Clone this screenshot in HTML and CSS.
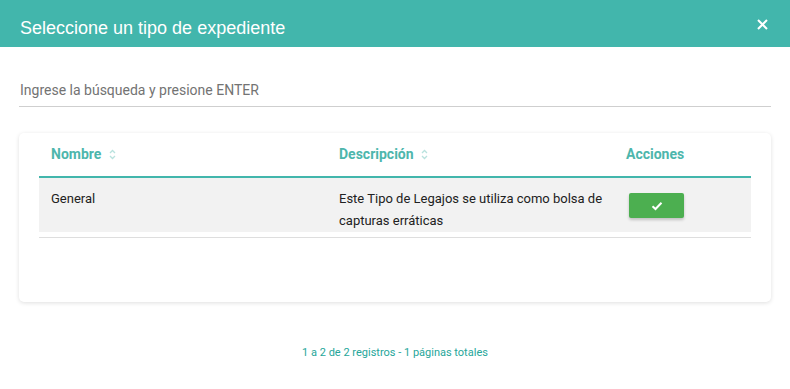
FILE: index.html
```html
<!DOCTYPE html>
<html lang="es">
<head>
    <meta charset="utf-8" />
    <title>Seleccione un tipo de expediente</title>
    <link rel="stylesheet" href="styles.css">
</head>
<body>

    <div class="modal-header">
        <h1>Seleccione un tipo de expediente</h1>
        <span class="close">
            <svg width="11" height="11" viewBox="0 0 11 11"><path d="M1 1L10 10M10 1L1 10" stroke="#fff" stroke-width="2" fill="none"/></svg>
        </span>
    </div>

    <div class="modal-body">
        <div class="search">
            <input type="text" placeholder="Ingrese la búsqueda y presione ENTER">
        </div>

        <div class="card">
            <table>
                <thead>
                    <tr>
                        <th class="col-name">Nombre <svg class="sort" width="7" height="11" viewBox="0 0 7 11"><path d="M1 4L3.5 1.5L6 4M1 7L3.5 9.5L6 7" stroke="#b9e2de" stroke-width="1.3" fill="none"/></svg></th>
                        <th class="col-desc">Descripción <svg class="sort" width="7" height="11" viewBox="0 0 7 11"><path d="M1 4L3.5 1.5L6 4M1 7L3.5 9.5L6 7" stroke="#b9e2de" stroke-width="1.3" fill="none"/></svg></th>
                        <th class="col-actions">Acciones</th>
                    </tr>
                </thead>
                <tbody>
                    <tr>
                        <td>General</td>
                        <td class="desc">Este Tipo de Legajos se utiliza como bolsa de capturas erráticas</td>
                        <td>
                            <button class="btn-ok">
                                <svg width="12" height="10" viewBox="0 0 12 10"><path d="M1.5 5.2L4.5 8L10.5 1.8" stroke="#fff" stroke-width="2" fill="none"/></svg>
                            </button>
                        </td>
                    </tr>
                </tbody>
            </table>
            <div class="rule"></div>
        </div>

        <p class="pager">1 a 2 de 2 registros - 1 páginas totales</p>
    </div>

</body>
</html>
```

FILE: styles.css
```css
body {
    background: #fff;
    color: #212121;
    font: 13px Roboto, 'Liberation Sans', arial, sans-serif;
    margin: 0;
    padding: 0;
}

.modal-header {
    background: #42b6ac;
    height: 47px;
    box-sizing: border-box;
    display: flex;
    align-items: center;
    justify-content: space-between;
    padding: 8px 22px 0 20px;
}

    .modal-header h1 {
        font: 18px 'Liberation Sans', arial, sans-serif;
        color: #fff;
        margin: 0;
        padding-top: 2px;
    }

    .modal-header .close {
        display: flex;
        margin-top: -7px;
    }

.modal-body {
    padding: 0 19px;
}

.search {
    padding-top: 23px;
}

    .search input {
        width: 100%;
        box-sizing: border-box;
        height: 37px;
        border: none;
        border-bottom: 1px solid #cfcfcf;
        outline: none;
        padding: 3px 1px 0;
        font: 14px Roboto, sans-serif;
        color: #212121;
    }

        .search input::placeholder {
            color: #737373;
        }

.card {
    margin-top: 26px;
    background: #fff;
    border-radius: 5px;
    box-shadow: 0 1px 4px rgba(0, 0, 0, 0.13);
    padding: 0 20px 64px;
}

table {
    width: 100%;
    border-collapse: collapse;
}

th {
    text-align: left;
    font: bold 14px Roboto, sans-serif;
    color: #4db6ac;
    padding: 12px 12px 12px;
    line-height: 19px;
    border-bottom: 2px solid #42b6ac;
}

    th .sort {
        margin-left: 4px;
        vertical-align: -1px;
    }

.col-name { width: 264px; }
.col-desc { width: 263px; }

td {
    background: #f2f2f2;
    vertical-align: top;
    padding: 10px 12px 0;
    line-height: 22px;
    height: 44px;
    color: #212121;
}

    td.desc {
        padding-right: 0;
    }

.btn-ok {
    margin: 5px 0 0 3px;
    width: 55px;
    height: 25px;
    border: none;
    border-radius: 2px;
    background: #4caf50;
    box-shadow: 0 2px 3px rgba(0, 0, 0, 0.2);
    display: flex;
    align-items: center;
    justify-content: center;
    padding: 0;
}

.rule {
    margin-top: 5px;
    border-top: 1px solid #dedede;
}

.pager {
    text-align: center;
    font-size: 11px;
    color: #26a69a;
    margin: 44px 0 0;
}
```
